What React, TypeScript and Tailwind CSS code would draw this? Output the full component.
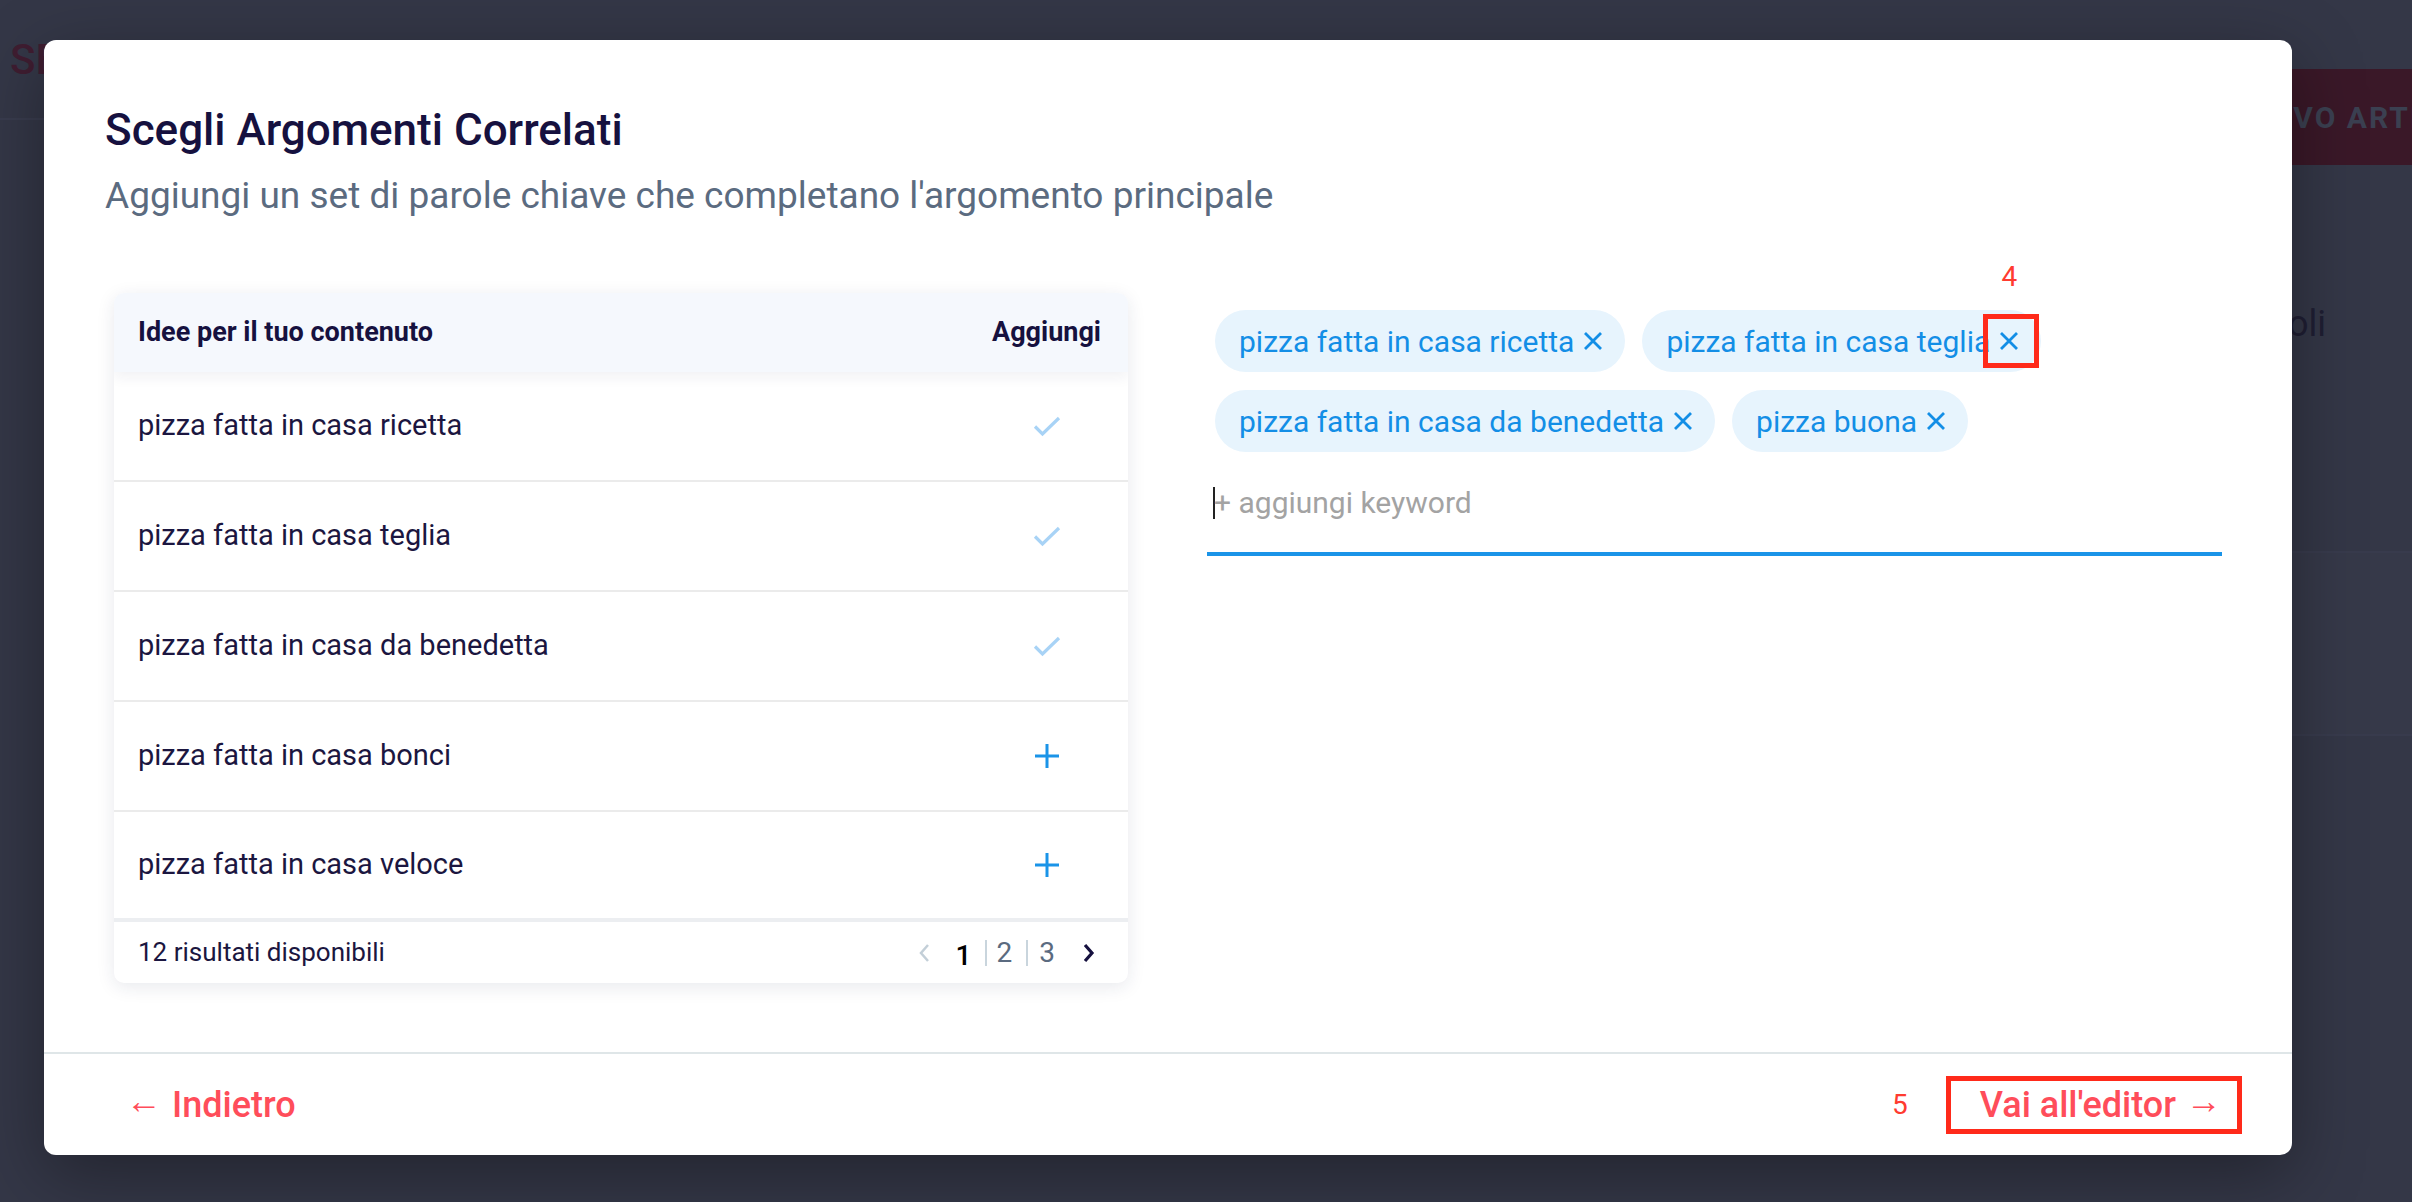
import React from 'react';

const rows = [
  { label: 'pizza fatta in casa ricetta', added: true },
  { label: 'pizza fatta in casa teglia', added: true },
  { label: 'pizza fatta in casa da benedetta', added: true },
  { label: 'pizza fatta in casa bonci', added: false },
  { label: 'pizza fatta in casa veloce', added: false },
];

const chips = [
  'pizza fatta in casa ricetta',
  'pizza fatta in casa teglia',
  'pizza fatta in casa da benedetta',
  'pizza buona',
];

const CheckIcon = () => (
  <svg width="28" height="22" viewBox="0 0 28 22" fill="none">
    <path d="M2 11.5 L9.5 19 L26 3" stroke="#a8d3f6" strokeWidth="3.2" />
  </svg>
);

const PlusIcon = () => (
  <svg width="24" height="24" viewBox="0 0 24 24" fill="none">
    <path d="M12 0 V24 M0 12 H24" stroke="#1a94e8" strokeWidth="3" />
  </svg>
);

const XIcon = () => (
  <svg width="20" height="20" viewBox="0 0 20 20" fill="none">
    <path d="M2 2 L18 18 M18 2 L2 18" stroke="#138ee6" strokeWidth="2.8" />
  </svg>
);

const Chevron = ({ dir, color, width }: { dir: 'left' | 'right'; color: string; width: number }) => (
  <svg width="12" height="20" viewBox="0 0 12 20" fill="none">
    <path
      d={dir === 'left' ? 'M10 2 L3 10 L10 18' : 'M2 2 L9 10 L2 18'}
      stroke={color}
      strokeWidth={width}
    />
  </svg>
);

const Chip: React.FC<{ label: string; marked?: boolean }> = ({ label, marked }) => (
  <div className="flex items-center h-[62px] pl-[24px] pr-[22px] rounded-full bg-[#e7f4fd] text-[#138ee6] text-[30px]">
    <span>{label}</span>
    <span className="relative ml-[9px] flex items-center">
      <XIcon />
      {marked && (
        <>
          <span className="absolute left-[-16px] top-[-17px] w-[56px] h-[54px] border-[5px] border-[#ff2a1a]" />
          <span className="absolute left-[-2px] top-[-70px] w-[24px] text-center text-[28px] leading-[32px] text-[#ff3b30]">
            4
          </span>
        </>
      )}
    </span>
  </div>
);

export default function App() {
  return (
    <div
      className="relative w-[2412px] h-[1202px] overflow-hidden bg-[#343747]"
      style={{ fontFamily: 'Roboto, "Liberation Sans", sans-serif' }}
    >
      {/* page behind the overlay */}
      <div className="flex items-start">
        <div className="flex-1 flex items-center h-[120px] border-b-2 border-[#393c4e]">
          <span className="pl-[10px] text-[42px] font-medium text-[#3f1d31]">SEO Writer</span>
        </div>
        <div className="mt-[69px] w-[216px] flex items-center h-[96px] pl-[30px] bg-[#3a1828] text-[30px] font-bold tracking-[2px] text-[#3b4051] whitespace-nowrap overflow-hidden">
          NUOVO ARTICOLO
        </div>
      </div>
      <div className="flex justify-end pr-[86px] pt-[132px]">
        <span className="text-[36px] text-[#1f1e33]">Articoli</span>
      </div>
      <div className="ml-auto mr-[-40px] mt-[200px] w-[340px] h-[185px] rounded-[10px] border-2 border-[#383b4d] bg-[#363949]" />

      {/* modal */}
      <div className="absolute left-[44px] top-[40px] w-[2248px] h-[1115px] bg-white rounded-[12px] flex flex-col shadow-[0_20px_70px_rgba(0,0,0,0.35)]">
        <div className="px-[61px] pt-[64px]">
          <h1 className="text-[44px] leading-[52px] font-medium text-[#16113f]">Scegli Argomenti Correlati</h1>
          <p className="mt-[18px] text-[37px] leading-[44px] text-[#5b6b80]">
            Aggiungi un set di parole chiave che completano l'argomento principale
          </p>
        </div>

        <div className="flex flex-1 gap-[79px] px-[70px] mt-[75px]">
          {/* ideas table */}
          <div className="w-[1014px] self-start rounded-[10px] bg-white shadow-[0_4px_18px_rgba(30,40,80,0.10)] overflow-hidden">
            <div className="relative z-10 flex items-center justify-between h-[79px] pl-[24px] pr-[27px] bg-[#f5f8fd] shadow-[0_6px_12px_rgba(30,40,80,0.06)] text-[27px] font-bold text-[#16113f]">
              <span>Idee per il tuo contenuto</span>
              <span>Aggiungi</span>
            </div>
            {rows.map((row, i) => (
              <div
                key={row.label}
                className={
                  i === rows.length - 1
                    ? 'flex items-center justify-between h-[110px] pl-[24px] pr-[27px] border-b-4 border-[#eceef1]'
                    : 'flex items-center justify-between h-[110px] pl-[24px] pr-[27px] border-b-2 border-[#ebebeb]'
                }
              >
                <span className="text-[29px] text-[#1b1640]">{row.label}</span>
                <span className="w-[108px] flex justify-center">{row.added ? <CheckIcon /> : <PlusIcon />}</span>
              </div>
            ))}
            <div className="flex items-center justify-between h-[61px] pl-[24px] pr-[33px]">
              <span className="text-[26px] text-[#1b1640]">12 risultati disponibili</span>
              <div className="flex items-center">
                <Chevron dir="left" color="#c3cfd8" width={2.5} />
                <span className="ml-[26px] translate-y-[3px] text-[28px] font-medium text-black">1</span>
                <span className="ml-[13px] w-[2px] h-[26px] bg-[#c9d5dd]" />
                <span className="ml-[10px] text-[28px] text-[#5b6b80]">2</span>
                <span className="ml-[14px] w-[2px] h-[26px] bg-[#c9d5dd]" />
                <span className="ml-[11px] text-[28px] text-[#5b6b80]">3</span>
                <span className="ml-[28px] flex">
                  <Chevron dir="right" color="#16113f" width={3.2} />
                </span>
              </div>
            </div>
          </div>

          {/* selected keywords */}
          <div className="w-[1015px] pt-[17px]">
            <div className="flex flex-wrap gap-x-[17px] gap-y-[18px] pl-[8px]">
              {chips.map((c, i) => (
                <Chip key={c} label={c} marked={i === 1} />
              ))}
            </div>
            <div className="mt-[33px] pb-[31px] border-b-4 border-[#1a94e8] flex items-center pl-[6px]">
              <span className="w-[2px] h-[32px] bg-[#222]" />
              <span className="-ml-[1px] text-[30px] leading-[36px] text-[#a3a3a3]">+ aggiungi keyword</span>
            </div>
          </div>
        </div>

        <div className="flex items-center justify-between h-[103px] border-t-2 border-[#dfe6e8] pl-[82px] pr-[50px]">
          <button className="flex items-center text-[36px] font-medium text-[#ff4d5a]">
            <span className="relative -top-[4px]">←</span>
            <span className="ml-[10px]">Indietro</span>
          </button>
          <div className="flex items-center">
            <span className="text-[28px] text-[#ff3b30]">5</span>
            <button className="ml-[38px] flex items-center h-[58px] pl-[29px] pr-[15px] border-[5px] border-[#ff2a1a] text-[36px] font-medium text-[#ff4d5a]">
              <span>Vai all'editor</span>
              <span className="relative -top-[4px] ml-[10px]">→</span>
            </button>
          </div>
        </div>
      </div>
    </div>
  );
}
